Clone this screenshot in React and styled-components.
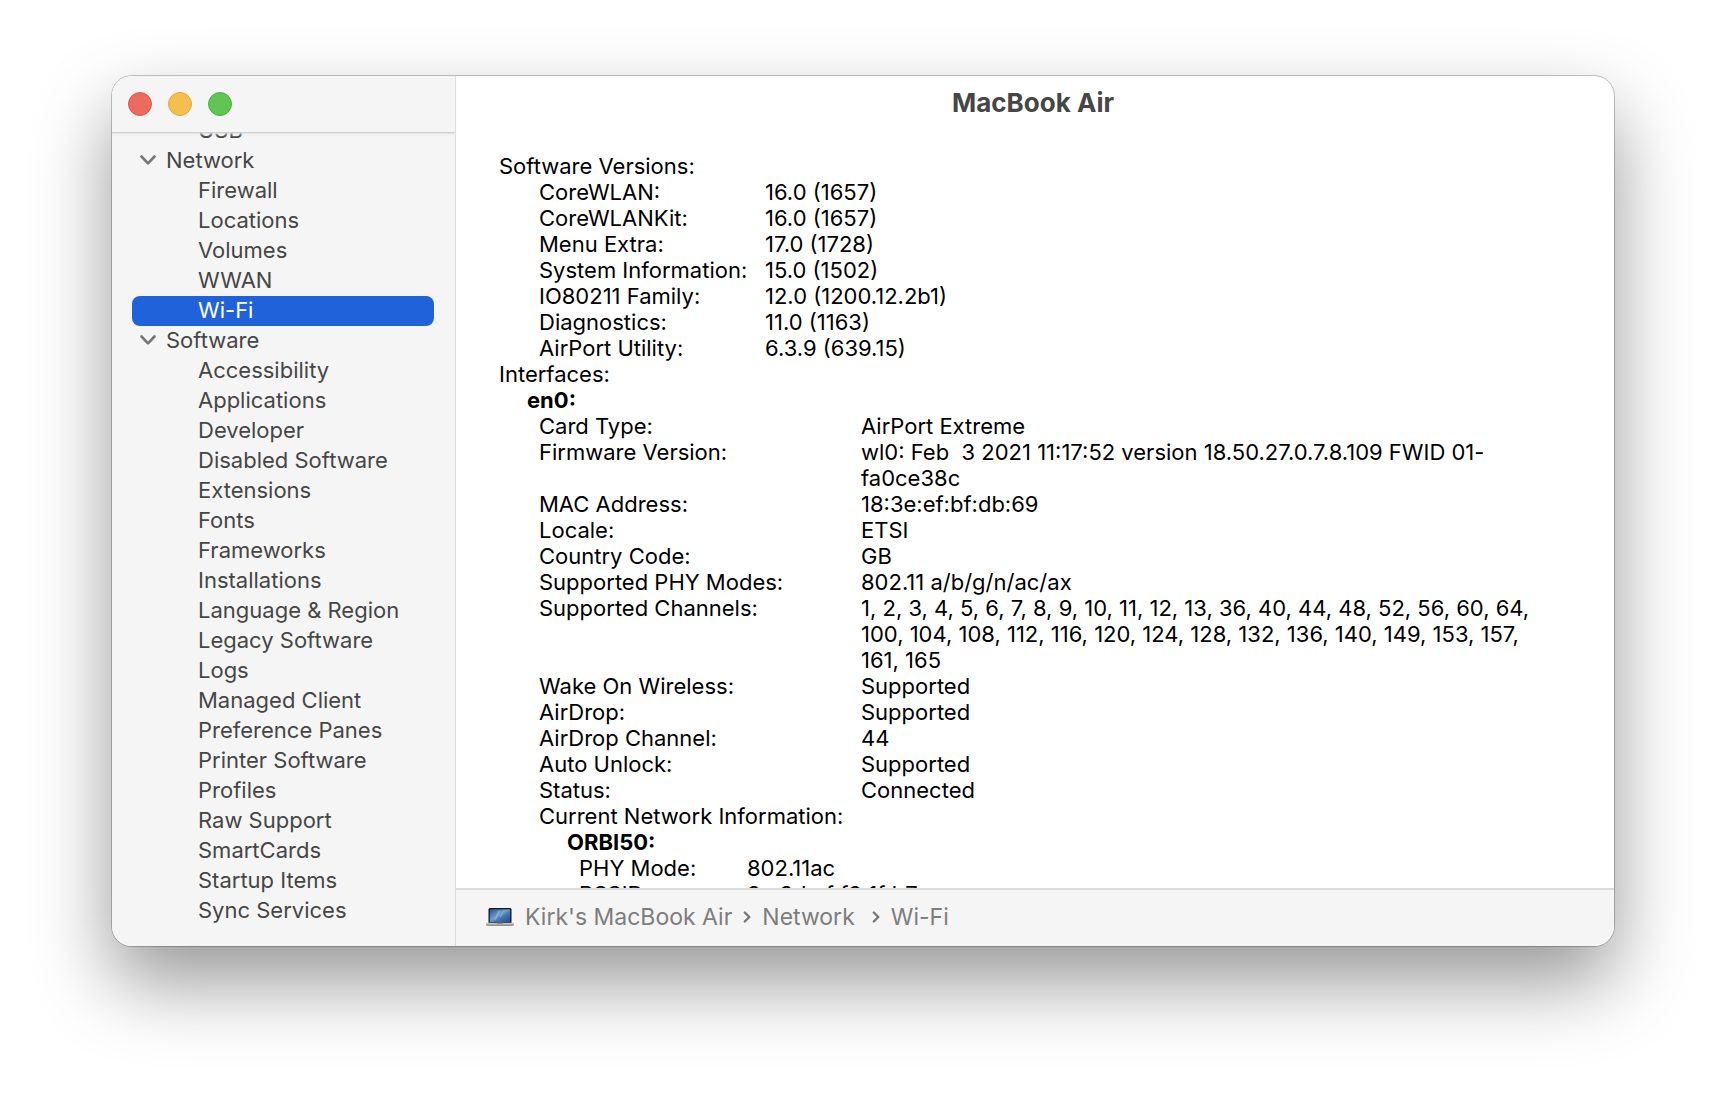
import React, { useState } from "react";
import styled, { createGlobalStyle } from "styled-components";

const GlobalStyle = createGlobalStyle`
  *, *::before, *::after { box-sizing: border-box; }
  body {
    margin: 0;
    background: #fff;
    font-family: Inter, "Liberation Sans", sans-serif;
    font-size: 22px;
    line-height: 26px;
    color: #000;
  }
  button { font: inherit; color: inherit; background: none; border: 0; padding: 0; }
`;

const Desktop = styled.div`
  display: flex;
  height: 100vh;
  padding: 76px 112px 148px;
`;

const Window = styled.div`
  display: flex;
  flex: 1;
  min-width: 0;
  border-radius: 20px;
  overflow: hidden;
  background: #fff;
  box-shadow: 0 0 0 1px rgba(0, 0, 0, 0.22), 0 36px 78px rgba(0, 0, 0, 0.41);
`;

const Sidebar = styled.aside`
  display: flex;
  flex-direction: column;
  flex: 0 0 344px;
  background: #f5f5f5;
  border-right: 1px solid #dcdcdc;
  color: #464646;
`;

const WindowControls = styled.div`
  display: flex;
  flex: 0 0 56px;
  align-items: center;
  gap: 16px;
  padding: 0 16px;
  z-index: 1;
  box-shadow: 0 1px 1px #cfcfcf, 0 2px 3px #e6e6e6;
`;

const ControlDot = styled.button`
  width: 24px;
  height: 24px;
  border-radius: 50%;
  background: ${(p) => p.$fill};
  border: 1px solid ${(p) => p.$edge};
`;

const Tree = styled.nav`
  display: flex;
  flex: 1;
  flex-direction: column;
  justify-content: flex-end;
  min-height: 0;
  overflow: hidden;
  padding: 0 21px 20px 20px;
`;

const GroupButton = styled.button`
  display: flex;
  flex: 0 0 30px;
  align-items: center;
  gap: 10px;
  padding: 0 0 2px 8px;
  text-align: left;
`;

const ItemButton = styled.button`
  flex: 0 0 30px;
  padding: 0 0 2px 66px;
  text-align: left;
  border-radius: 8px;
  background: ${(p) => (p.$selected ? "#2062d9" : "transparent")};
  color: ${(p) => (p.$selected ? "#fff" : "inherit")};
`;

const Main = styled.main`
  display: flex;
  flex: 1;
  flex-direction: column;
  min-width: 0;
`;

const TitleBar = styled.header`
  flex: 0 0 56px;
  display: flex;
  align-items: center;
  justify-content: center;
  padding: 0 4px 2px 0;
`;

const Title = styled.h1`
  margin: 0;
  font-size: 26px;
  line-height: 30px;
  font-weight: 700;
  color: #464646;
`;

const Report = styled.section`
  flex: 1;
  min-height: 0;
  overflow: hidden;
  padding: 21px 60px 0 43px;
`;

const Line = styled.div`
  padding-left: ${(p) => p.$indent || 0}px;
  font-weight: ${(p) => (p.$strong ? 700 : 400)};
`;

const Facts = styled.dl`
  display: grid;
  grid-template-columns: ${(p) => p.$labels}px 1fr;
  margin: 0;
  padding-left: ${(p) => p.$indent}px;
`;

const Label = styled.dt`
  white-space: nowrap;
`;

const Value = styled.dd`
  margin: 0;
  white-space: pre-wrap;
`;

const PathBar = styled.footer`
  display: flex;
  flex: 0 0 58px;
  align-items: center;
  gap: 11px;
  padding: 0 30px 2px;
  border-top: 2px solid #dcdcdc;
  background: #f5f5f5;
  color: #7d7d7d;
  font-size: 23px;
`;

const Crumb = styled.a`
  color: inherit;
  text-decoration: none;
  padding-right: ${(p) => (p.$wide ? 6 : 0)}px;
`;

const groups = [
  { items: ["USB"] },
  { name: "Network", items: ["Firewall", "Locations", "Volumes", "WWAN", "Wi-Fi"] },
  {
    name: "Software",
    items: [
      "Accessibility", "Applications", "Developer", "Disabled Software", "Extensions",
      "Fonts", "Frameworks", "Installations", "Language & Region", "Legacy Software",
      "Logs", "Managed Client", "Preference Panes", "Printer Software", "Profiles",
      "Raw Support", "SmartCards", "Startup Items", "Sync Services",
    ],
  },
];

const versions = [
  ["CoreWLAN:", "16.0 (1657)"],
  ["CoreWLANKit:", "16.0 (1657)"],
  ["Menu Extra:", "17.0 (1728)"],
  ["System Information:", "15.0 (1502)"],
  ["IO80211 Family:", "12.0 (1200.12.2b1)"],
  ["Diagnostics:", "11.0 (1163)"],
  ["AirPort Utility:", "6.3.9 (639.15)"],
];

const card = [
  ["Card Type:", "AirPort Extreme"],
  ["Firmware Version:", "wl0: Feb  3 2021 11:17:52 version 18.50.27.0.7.8.109 FWID 01-fa0ce38c"],
  ["MAC Address:", "18:3e:ef:bf:db:69"],
  ["Locale:", "ETSI"],
  ["Country Code:", "GB"],
  ["Supported PHY Modes:", "802.11 a/b/g/n/ac/ax"],
  [
    "Supported Channels:",
    "1, 2, 3, 4, 5, 6, 7, 8, 9, 10, 11, 12, 13, 36, 40, 44, 48, 52, 56, 60, 64, 100, 104, 108, 112, 116, 120, 124, 128, 132, 136, 140, 149, 153, 157, 161, 165",
  ],
  ["Wake On Wireless:", "Supported"],
  ["AirDrop:", "Supported"],
  ["AirDrop Channel:", "44"],
  ["Auto Unlock:", "Supported"],
  ["Status:", "Connected"],
];

const network = [
  ["PHY Mode:", "802.11ac"],
  ["BSSID:", "3c:3d:ef:f8:1f:b7"],
];

function FactList({ rows, indent, labels }) {
  return (
    <Facts $indent={indent} $labels={labels}>
      {rows.map(([label, value]) => (
        <React.Fragment key={label}>
          <Label>{label}</Label>
          <Value>{value}</Value>
        </React.Fragment>
      ))}
    </Facts>
  );
}

const Disclosure = () => (
  <svg width="16" height="10" viewBox="0 0 16 10" fill="none" stroke="#757575" strokeWidth="2.6" strokeLinecap="round" strokeLinejoin="round" aria-hidden="true">
    <path d="M1.500 1.500 8 8.300l6.500-6.800" />
  </svg>
);

const Separator = () => (
  <svg width="8" height="12" viewBox="0 0 8 12" fill="none" stroke="#757575" strokeWidth="2.4" strokeLinecap="round" strokeLinejoin="round" aria-hidden="true">
    <path d="M1.800 1.500 6.300 6l-4.500 4.500" />
  </svg>
);

const Laptop = () => (
  <svg width="28" height="20" viewBox="0 0 28 20" aria-hidden="true">
    <defs>
      <linearGradient id="screen" x1="0" y1="0" x2="1" y2="1">
        <stop offset="0" stopColor="#2c5490" />
        <stop offset="0.45" stopColor="#6d9fd2" />
        <stop offset="0.6" stopColor="#4777b5" />
        <stop offset="1" stopColor="#24498a" />
      </linearGradient>
      <linearGradient id="base" x1="0" y1="0" x2="0" y2="1">
        <stop offset="0" stopColor="#d5d5d5" />
        <stop offset="1" stopColor="#858585" />
      </linearGradient>
    </defs>
    <rect x="2.500" y="1" width="23" height="16" rx="1.500" fill="#15181e" />
    <rect x="3.800" y="2.300" width="20.400" height="12.800" fill="url(#screen)" />
    <path d="M8 13 12.500 4h2L9.500 13zM14 10l3-6h1l-3 6z" fill="#a9c8e6" opacity=".55" />
    <path d="M0 15.800h28v1.700q0 1.500-2 1.500H2q-2 0-2-1.500z" fill="url(#base)" />
    <path d="M10.500 15.800h7q0 1.200-1.200 1.200h-4.600q-1.200 0-1.200-1.200z" fill="#8e8e8e" />
  </svg>
);

export default function App() {
  const [selected, setSelected] = useState("Wi-Fi");
  return (
    <>
      <GlobalStyle />
      <Desktop>
        <Window>
          <Sidebar>
            <WindowControls>
              <ControlDot $fill="#ed6a5f" $edge="#d95a50" aria-label="Close" />
              <ControlDot $fill="#f6be4f" $edge="#dfa73f" aria-label="Minimize" />
              <ControlDot $fill="#61c554" $edge="#50ae43" aria-label="Zoom" />
            </WindowControls>
            <Tree aria-label="Report sections">
              {groups.map((group) => (
                <React.Fragment key={group.name || "Hardware"}>
                  {group.name && (
                    <GroupButton aria-expanded="true">
                      <Disclosure />
                      {group.name}
                    </GroupButton>
                  )}
                  {group.items.map((item) => (
                    <ItemButton key={item} $selected={item === selected} onClick={() => setSelected(item)}>
                      {item}
                    </ItemButton>
                  ))}
                </React.Fragment>
              ))}
            </Tree>
          </Sidebar>
          <Main>
            <TitleBar>
              <Title>MacBook Air</Title>
            </TitleBar>
            <Report>
              <Line>Software Versions:</Line>
              <FactList rows={versions} indent={40} labels={226} />
              <Line>Interfaces:</Line>
              <Line $indent={28} $strong>en0:</Line>
              <FactList rows={card} indent={40} labels={322} />
              <Line $indent={40}>Current Network Information:</Line>
              <Line $indent={68} $strong>ORBI50:</Line>
              <FactList rows={network} indent={80} labels={168} />
            </Report>
            <PathBar>
              <Laptop />
              <Crumb href="#mac">Kirk's MacBook Air</Crumb>
              <Separator />
              <Crumb href="#network" $wide>Network</Crumb>
              <Separator />
              <Crumb href="#wifi">Wi-Fi</Crumb>
            </PathBar>
          </Main>
        </Window>
      </Desktop>
    </>
  );
}
